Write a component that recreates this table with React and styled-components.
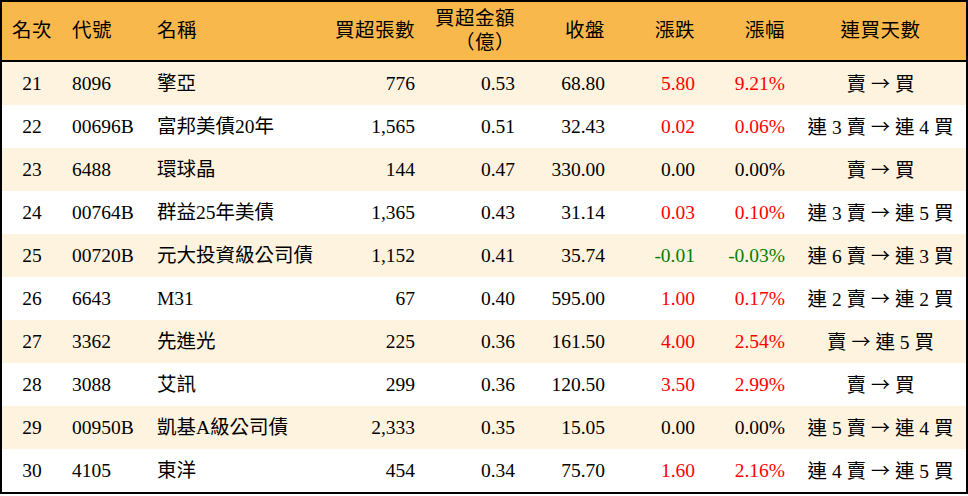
import React from "react";
import styled, { createGlobalStyle } from "styled-components";

const GlobalStyle = createGlobalStyle`
  html, body {
    margin: 0;
    padding: 0;
    background: #ffffff;
  }
  body {
    font-family: "Liberation Serif", "Noto Sans CJK TC", serif;
  }
`;

const rows = [
  { rank: 21, code: "8096", name: "擎亞", lots: "776", amount: "0.53", close: "68.80", change: "5.80", pct: "9.21%", from: "賣", to: "買" },
  { rank: 22, code: "00696B", name: "富邦美債20年", lots: "1,565", amount: "0.51", close: "32.43", change: "0.02", pct: "0.06%", from: "連 3 賣", to: "連 4 買" },
  { rank: 23, code: "6488", name: "環球晶", lots: "144", amount: "0.47", close: "330.00", change: "0.00", pct: "0.00%", from: "賣", to: "買" },
  { rank: 24, code: "00764B", name: "群益25年美債", lots: "1,365", amount: "0.43", close: "31.14", change: "0.03", pct: "0.10%", from: "連 3 賣", to: "連 5 買" },
  { rank: 25, code: "00720B", name: "元大投資級公司債", lots: "1,152", amount: "0.41", close: "35.74", change: "-0.01", pct: "-0.03%", from: "連 6 賣", to: "連 3 買" },
  { rank: 26, code: "6643", name: "M31", lots: "67", amount: "0.40", close: "595.00", change: "1.00", pct: "0.17%", from: "連 2 賣", to: "連 2 買" },
  { rank: 27, code: "3362", name: "先進光", lots: "225", amount: "0.36", close: "161.50", change: "4.00", pct: "2.54%", from: "賣", to: "連 5 買" },
  { rank: 28, code: "3088", name: "艾訊", lots: "299", amount: "0.36", close: "120.50", change: "3.50", pct: "2.99%", from: "賣", to: "買" },
  { rank: 29, code: "00950B", name: "凱基A級公司債", lots: "2,333", amount: "0.35", close: "15.05", change: "0.00", pct: "0.00%", from: "連 5 賣", to: "連 4 買" },
  { rank: 30, code: "4105", name: "東洋", lots: "454", amount: "0.34", close: "75.70", change: "1.60", pct: "2.16%", from: "連 4 賣", to: "連 5 買" },
];

const toneOf = (v) => {
  const n = parseFloat(v);
  if (n > 0) return "up";
  if (n < 0) return "down";
  return "flat";
};

export default function App() {
  return (
    <>
      <GlobalStyle />
      <Table>
        <colgroup>
          <col style={{ width: 60 }} />
          <col style={{ width: 85 }} />
          <col style={{ width: 178 }} />
          <col style={{ width: 100 }} />
          <col style={{ width: 100 }} />
          <col style={{ width: 90 }} />
          <col style={{ width: 90 }} />
          <col style={{ width: 90 }} />
          <col />
        </colgroup>
        <thead>
          <tr>
            <Th $align="center">名次</Th>
            <Th>代號</Th>
            <Th>名稱</Th>
            <Th $align="right">買超張數</Th>
            <Th $align="right">
              買超金額
              <br />
              （億）
            </Th>
            <Th $align="right">收盤</Th>
            <Th $align="right">漲跌</Th>
            <Th $align="right">漲幅</Th>
            <Th $align="center">連買天數</Th>
          </tr>
        </thead>
        <tbody>
          {rows.map((r, i) => (
            <Row key={r.rank} $striped={i % 2 === 0}>
              <Td $align="center">{r.rank}</Td>
              <Td>{r.code}</Td>
              <Td>{r.name}</Td>
              <Td $align="right">{r.lots}</Td>
              <Td $align="right">{r.amount}</Td>
              <Td $align="right">{r.close}</Td>
              <Td $align="right" $tone={toneOf(r.change)}>{r.change}</Td>
              <Td $align="right" $tone={toneOf(r.change)}>{r.pct}</Td>
              <Td $align="center">
                {r.from} <Arrow>→</Arrow> {r.to}
              </Td>
            </Row>
          ))}
        </tbody>
      </Table>
    </>
  );
}

const Table = styled.table`
  width: 968px;
  box-sizing: border-box;
  table-layout: fixed;
  border-collapse: separate;
  border-spacing: 0;
  border: 2px solid #000000;
  font-size: 19.5px;
  color: #000000;
`;

const Th = styled.th`
  height: 60px;
  padding: 0 10px;
  box-sizing: border-box;
  background-color: #f9b84b;
  border-bottom: 2px solid #000000;
  font-weight: normal;
  line-height: 24px;
  letter-spacing: 0.5px;
  text-align: ${(p) => p.$align || "left"};
  vertical-align: middle;
  white-space: nowrap;
`;

const Row = styled.tr`
  background-color: ${(p) => (p.$striped ? "#fef3df" : "#ffffff")};
`;

const Td = styled.td`
  height: 43px;
  padding: 0 10px;
  box-sizing: border-box;
  line-height: 22px;
  text-align: ${(p) => p.$align || "left"};
  vertical-align: middle;
  white-space: nowrap;
  color: ${(p) =>
    p.$tone === "up" ? "#ff0000" : p.$tone === "down" ? "#008000" : "#000000"};
`;

const Arrow = styled.span`
  font-family: "Noto Sans CJK TC", sans-serif;
  font-size: 19px;
`;
